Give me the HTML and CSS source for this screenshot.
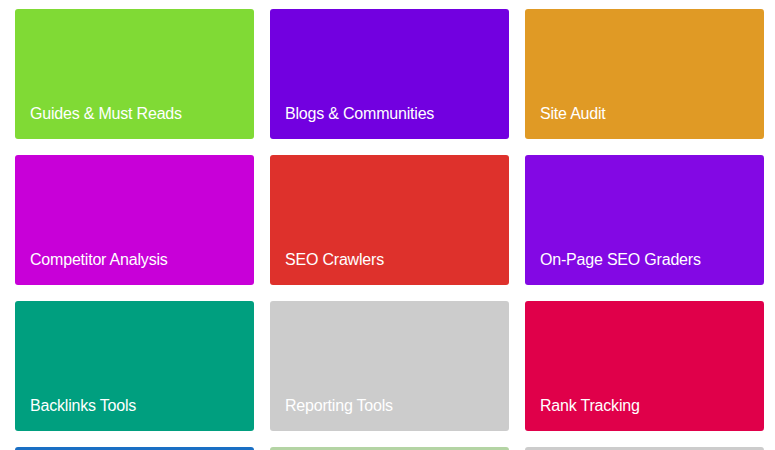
FILE: index.html
```html
<!DOCTYPE html>
<html>
<head>
<meta charset="utf-8">
<link rel="stylesheet" href="styles.css">
</head>
<body>
<div class="grid">
  <a class="card c-green">Guides &amp; Must Reads</a>
  <a class="card c-purple">Blogs &amp; Communities</a>
  <a class="card c-orange">Site Audit</a>
  <a class="card c-magenta">Competitor Analysis</a>
  <a class="card c-red">SEO Crawlers</a>
  <a class="card c-violet">On-Page SEO Graders</a>
  <a class="card c-teal">Backlinks Tools</a>
  <a class="card c-gray">Reporting Tools</a>
  <a class="card c-crimson">Rank Tracking</a>
  <a class="card c-blue"></a>
  <a class="card c-sage"></a>
  <a class="card c-gray"></a>
</div>
</body>
</html>
```
FILE: styles.css
```css
html, body {
  margin: 0;
  padding: 0;
  background: #ffffff;
}
body {
  font-family: "Liberation Sans", Arial, Helvetica, sans-serif;
  overflow: hidden;
}
.grid {
  display: grid;
  grid-template-columns: repeat(3, 239px);
  grid-auto-rows: 130px;
  column-gap: 16px;
  row-gap: 16px;
  padding: 9px 0 0 15px;
}
.card {
  display: flex;
  flex-direction: column;
  justify-content: flex-end;
  border-radius: 3px;
  padding: 0 15px 16px 15px;
  color: #ffffff;
  font-size: 16px;
  line-height: 18px;
  letter-spacing: -0.2px;
  text-decoration: none;
  box-sizing: border-box;
}
.c-green { background: #80da35; }
.c-purple { background: #7200e0; }
.c-orange { background: #e09a25; }
.c-magenta { background: #c800d8; }
.c-red { background: #de312c; }
.c-violet { background: #8308e4; }
.c-teal { background: #009f7f; }
.c-gray { background: #cccccc; }
.c-crimson { background: #e0004a; }
.c-blue { background: #1a6fc4; }
.c-sage { background: #b4d4a4; }
```
